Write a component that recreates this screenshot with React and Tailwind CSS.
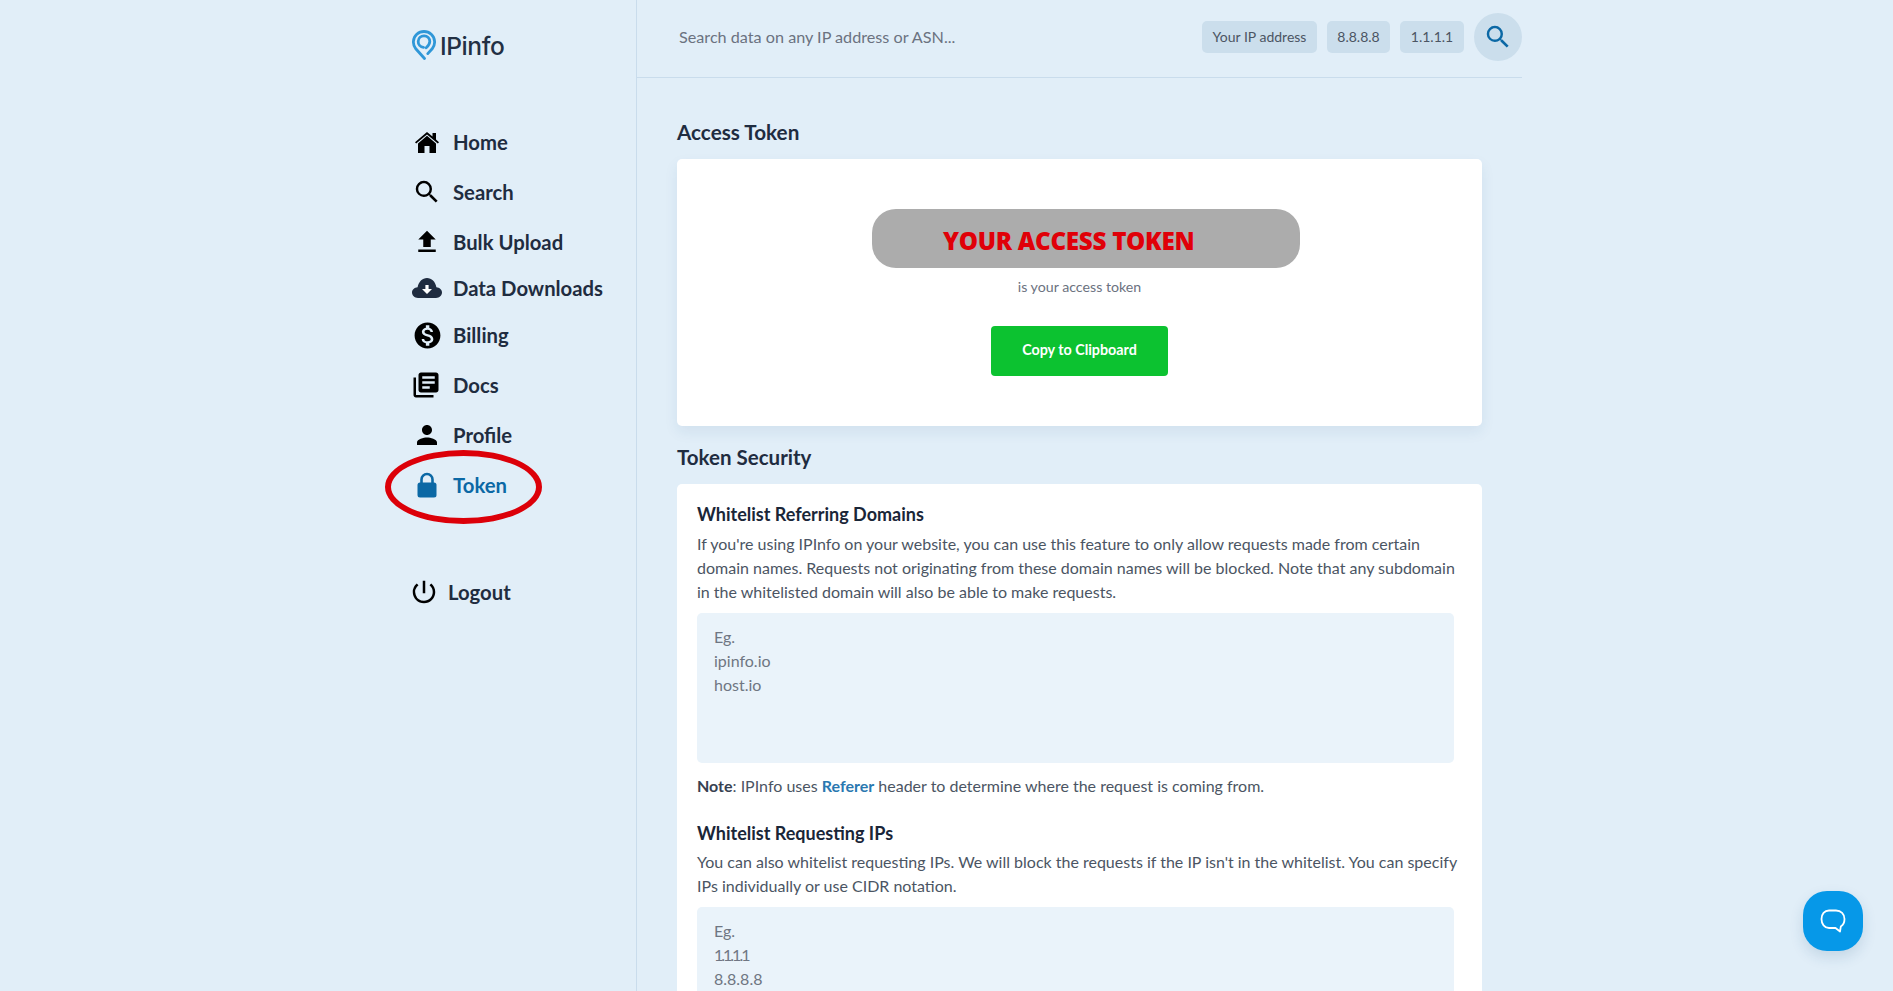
import {
  MdSearch,
  MdFileUpload,
  MdMonetizationOn,
  MdLibraryBooks,
  MdPerson,
  MdPowerSettingsNew,
} from 'react-icons/md';

function HomeIcon() {
  return (
    <svg viewBox="0 0 24 21" className="w-[24px] h-[21px]" fill="black">
      <path d="M12 0 L17.5 4.6 V1 H21 V7.6 L24 10.2 L22.8 11.6 L12 2.6 L1.2 11.6 L0 10.2 Z" />
      <path d="M12 3.8 L21 11.4 V21 H14.5 V14 H9.5 V21 H3 V11.4 Z" />
    </svg>
  );
}

function CloudIcon() {
  return (
    <svg viewBox="0 0 30 20" className="w-[30px] h-[20px]">
      <path
        fill="#1f2c40"
        d="M6 20 C2.5 20 0 17.6 0 14.6 C0 11.6 2.4 9.4 5.6 9.2 C6.6 3.8 10.4 0 15 0 C19.6 0 23.4 3.6 24.4 9.2 C27.6 9.4 30 11.6 30 14.6 C30 17.6 27.5 20 24 20 Z"
      />
      <path fill="white" d="M13.4 7 H16.6 V11 H20 L15 16 L10 11 H13.4 Z" />
    </svg>
  );
}

function LockIcon() {
  return (
    <svg viewBox="0 0 20 26" className="w-[20px] h-[26px]">
      <path d="M4.5 12 V7.5 A5.5 5.5 0 0 1 15.5 7.5 V12" fill="none" stroke="#0b68a5" strokeWidth="2.6" />
      <rect x="0.5" y="10.5" width="19" height="15" rx="2.5" fill="#0b68a5" />
    </svg>
  );
}

const navItems = [
  { label: 'Home', icon: <HomeIcon />, row: 'h-[50px]' },
  { label: 'Search', icon: <MdSearch className="w-[30px] h-[30px] text-black" />, row: 'h-[50px]' },
  { label: 'Bulk Upload', icon: <MdFileUpload className="w-[30px] h-[30px] text-black" />, row: 'h-[50px]' },
  { label: 'Data Downloads', icon: <CloudIcon />, row: 'h-[46px] -mt-[2px]' },
  { label: 'Billing', icon: <MdMonetizationOn className="w-[31px] h-[31px] text-black shrink-0" />, row: 'h-[48px]' },
  { label: 'Docs', icon: <MdLibraryBooks className="w-[30px] h-[30px] text-black -ml-[3px] shrink-0" />, row: 'h-[50px] mt-[1px]' },
  { label: 'Profile', icon: <MdPerson className="w-[30px] h-[30px] text-black" />, row: 'h-[50px]' },
];

function Logo() {
  return (
    <div className="flex items-center gap-[3px]">
      <svg viewBox="0 0 24 30" className="w-[24px] h-[30px]" fill="none" stroke="#2f97d8" strokeWidth="2.8" strokeLinecap="round">
        <path d="M12.5 28.5 L3.8 18.8 A10.6 10.6 0 1 1 20.2 18.8 L15.8 23.6" />
        <path d="M11.5 17.4 A5.8 5.8 0 1 1 17.8 11.6 C17.8 14.2 16.2 16 14.2 17.8" />
      </svg>
      <span className="mt-[2px] ml-[1px] text-[24.5px] font-medium leading-none text-[#233044] font-['Inter',sans-serif] tracking-[-0.4px]">IPinfo</span>
    </div>
  );
}

function Sidebar() {
  return (
    <aside className="w-[266px] shrink-0 h-full border-r border-[#c9dcec] pl-[41px]">
      <div className="h-[117px] pt-[30px]">
        <Logo />
      </div>
      <nav className="text-[20.3px] font-bold text-[#1f2c40]">
        {navItems.map((item) => (
          <div key={item.label} className={`flex items-center ${item.row}`}>
            <span className="w-[30px] flex justify-center">{item.icon}</span>
            <span className="ml-[11px]">{item.label}</span>
          </div>
        ))}
        <div className="relative flex items-center h-[50px] text-[#0b68a5]">
          <span className="w-[30px] flex justify-center">
            <LockIcon />
          </span>
          <span className="ml-[11px]">Token</span>
          {/* red marker round the active item */}
          <div className="absolute left-[-27px] top-[-10px] w-[157px] h-[74px] rounded-[50%] border-[6px] border-[#dc0009]"></div>
        </div>
        <div className="flex items-center mt-[57px] h-[50px]">
          <MdPowerSettingsNew className="w-[30px] h-[30px] text-black -ml-[3px]" />
          <span className="ml-[9px]">Logout</span>
        </div>
      </nav>
    </aside>
  );
}

function Header() {
  return (
    <header className="h-[78px] shrink-0 flex items-center border-b border-[#c9dcec] pl-[42px] pb-[3px]">
      <span className="text-[16.2px] text-[#6b7280]">Search data on any IP address or ASN...</span>
      <div className="ml-auto flex items-center gap-[10px] text-[14px] text-[#4b5563]">
        <span className="h-[32px] w-[115px] pb-[1px] flex items-center justify-center rounded-[5px] bg-[#cbdeec]">Your IP address</span>
        <span className="h-[32px] w-[63px] pb-[1px] flex items-center justify-center rounded-[5px] bg-[#cbdeec]">8.8.8.8</span>
        <span className="h-[32px] w-[64px] pb-[1px] flex items-center justify-center rounded-[5px] bg-[#cbdeec]">1.1.1.1</span>
        <span className="w-[48px] h-[48px] flex items-center justify-center rounded-full bg-[#cbdeec]">
          <MdSearch className="w-[30px] h-[30px] text-[#0b68a5]" />
        </span>
      </div>
    </header>
  );
}

function TokenCard() {
  return (
    <div className="h-[267px] bg-white rounded-[5px] shadow-[0_6px_14px_rgba(30,80,130,0.08)] flex flex-col items-center pt-[50px]">
      <div className="ml-[13px] w-[428px] h-[59px] rounded-[24px] bg-[#acacac] pl-[71px] pt-[6px] flex items-center">
        <span className="text-[24.2px] font-extrabold text-[#e00008] font-['Open_Sans',sans-serif] tracking-[-0.3px]">YOUR ACCESS TOKEN</span>
      </div>
      <p className="mt-[11px] text-[14.2px] leading-[16px] text-[#6b7280]">is your access token</p>
      <button className="mt-[31px] w-[177px] h-[50px] pb-[3px] rounded-[4px] bg-[#0cc230] text-white text-[14.3px] font-bold">
        Copy to Clipboard
      </button>
    </div>
  );
}

function SecurityCard() {
  return (
    <div className="bg-white rounded-[5px] px-[20px] pt-[18px] pb-[30px]">
      <h3 className="text-[18px] leading-[24px] font-bold text-[#1a2638]">Whitelist Referring Domains</h3>
      <p className="mt-[6px] text-[16px] leading-[24px] text-[#4b5563]">
        If you're using IPInfo on your website, you can use this feature to only allow requests made from certain
        domain names. Requests not originating from these domain names will be blocked. Note that any subdomain
        in the whitelisted domain will also be able to make requests.
      </p>
      <div className="mt-[9px] mr-[8px] h-[150px] rounded-[5px] bg-[#eaf3fa] px-[17px] py-[12px] text-[16px] leading-[24px] text-[#6f7682]">
        <div>Eg.</div>
        <div>ipinfo.io</div>
        <div>host.io</div>
      </div>
      <p className="mt-[11px] text-[16px] leading-[24px] text-[#4b5563]">
        <b className="text-[#374151]">Note</b>: IPInfo uses <a className="font-bold text-[#2a78b0]">Referer</a> header to determine where the request is coming from.
      </p>
      <h3 className="mt-[23px] text-[18px] leading-[24px] font-bold text-[#1a2638]">Whitelist Requesting IPs</h3>
      <p className="mt-[5px] text-[16px] leading-[24px] text-[#4b5563]">
        You can also whitelist requesting IPs. We will block the requests if the IP isn't in the whitelist. You can specify
        IPs individually or use CIDR notation.
      </p>
      <div className="mt-[9px] mr-[8px] h-[150px] rounded-[5px] bg-[#eaf3fa] px-[17px] py-[12px] text-[16px] leading-[24px] text-[#6f7682]">
        <div>Eg.</div>
        <div className="tracking-[-2px]">1.1.1.1</div>
        <div>8.8.8.8</div>
      </div>
    </div>
  );
}

export default function App() {
  return (
    <div className="relative h-screen overflow-hidden bg-[#e1eef8] font-['Lato',sans-serif]">
      <div className="w-[1151px] h-full ml-[371px] flex">
        <Sidebar />
        <main className="flex-1 min-w-0 flex flex-col">
          <Header />
          <div className="px-[40px]">
            <h2 className="mt-[40px] text-[20.7px] leading-[28px] font-bold text-[#1f2c40]">Access Token</h2>
            <div className="mt-[13px]">
              <TokenCard />
            </div>
            <h2 className="mt-[17px] text-[20.5px] leading-[28px] font-bold text-[#1f2c40]">Token Security</h2>
            <div className="mt-[13px]">
              <SecurityCard />
            </div>
          </div>
        </main>
      </div>
      <div className="absolute left-[1803px] top-[891px] w-[60px] h-[60px] rounded-[24px] bg-[#0698e8] shadow-[0_6px_14px_rgba(30,80,130,0.15)] flex items-center justify-center">
        <svg viewBox="0 0 28 28" className="w-[28px] h-[28px]" fill="none" stroke="white" strokeWidth="1.8" strokeLinejoin="round">
          <path d="M10 3.5 H17 C22 3.5 25.5 7 25.5 12 C25.5 16 23.5 18.5 21.8 19.6 L21 24.5 L16.5 21 H10 C5.5 21 2.5 17 2.5 12 C2.5 7 5.5 3.5 10 3.5 Z" />
        </svg>
      </div>
    </div>
  );
}
